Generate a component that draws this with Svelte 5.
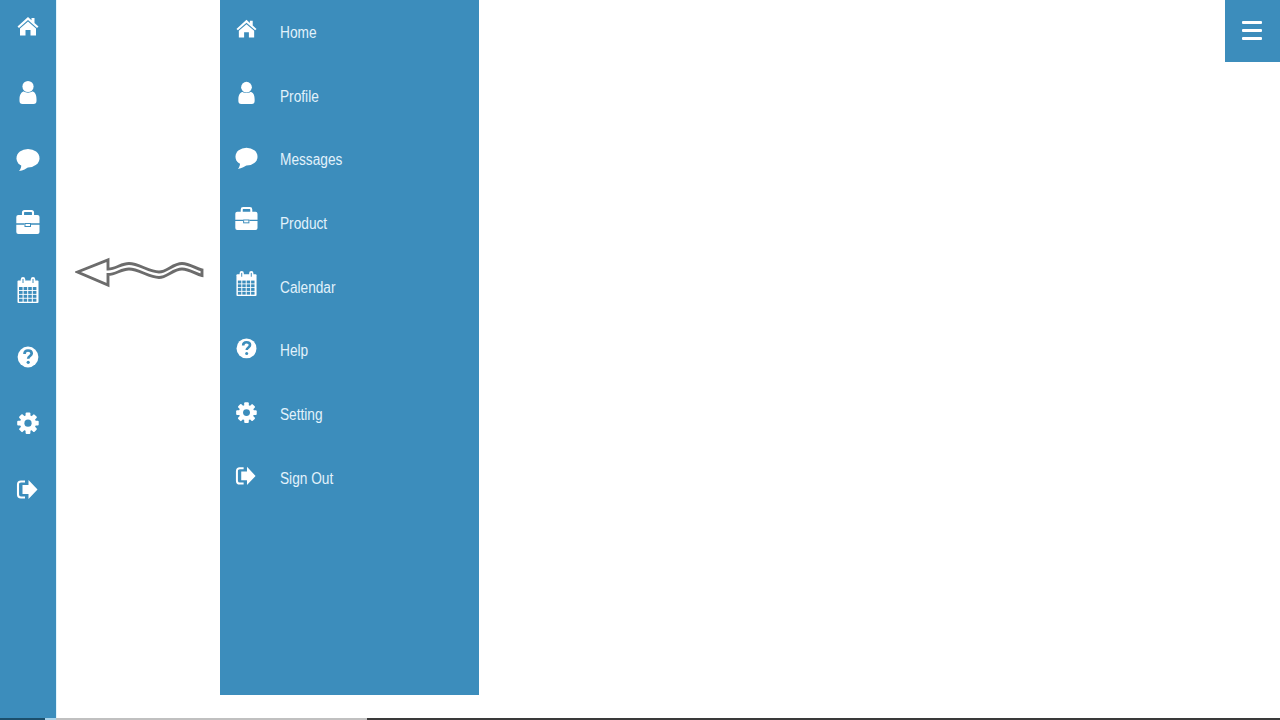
<script>
  const items = [
    { key: 'home', label: 'Home' },
    { key: 'user', label: 'Profile' },
    { key: 'comment', label: 'Messages' },
    { key: 'briefcase', label: 'Product' },
    { key: 'calendar', label: 'Calendar' },
    { key: 'help', label: 'Help' },
    { key: 'gear', label: 'Setting' },
    { key: 'signout', label: 'Sign Out' }
  ];
  const teeth = [0, 45, 90, 135];
  const cols = [0, 1, 2, 3];
  const rows = [0, 1, 2, 3];
</script>

{#snippet icon(key)}
  <svg class="icon" viewBox="0 0 24 28" aria-hidden="true">
    {#if key === 'home'}
      <path d="M12 4 L1.5 13.5 L3 15 L12 7 L21 15 L22.5 13.5 L18.5 10 V5 H15.5 V7.3 Z" />
      <path d="M4 15.5 L12 8.5 L20 15.5 V22.5 H14.5 V17 H9.5 V22.5 H4 Z" />
    {:else if key === 'user'}
      <circle cx="12" cy="7.5" r="5.6" />
      <path d="M3.5 20 C3.5 15 6 12.5 8 12.5 C9.5 14 14.5 14 16 12.5 C18.5 12.5 20.5 15 20.5 20 V22 Q20.5 25 17.5 25 H6.5 Q3.5 25 3.5 22 Z" />
    {:else if key === 'comment'}
      <ellipse cx="12" cy="13.2" rx="11.5" ry="9.3" />
      <path d="M5.5 18 C5.5 22 4.5 24.5 3 26 C7 25.5 10.5 24 13 21 Z" />
    {:else if key === 'briefcase'}
      <rect class="line-w" x="7" y="0" width="10" height="6" rx="1.5" />
      <rect x="0.3" y="4" width="23.2" height="19" rx="2" />
      <path class="line-b" d="M0 13 H8.5 M15 13 H24" />
      <rect class="line-b thin" x="9" y="12.5" width="5.5" height="3" />
    {:else if key === 'calendar'}
      <rect x="1.5" y="3.5" width="21" height="22.5" rx="1" />
      {#each rows as r}
        {#each cols as c}
          <rect class="cut" x={3 + c * 4.6} y={10 + r * 3.9} width="3.6" height="3" />
        {/each}
      {/each}
      <rect x="4.8" y="0" width="4.4" height="7.5" rx="2.2" />
      <rect x="14.8" y="0" width="4.4" height="7.5" rx="2.2" />
      <path class="line-b thin" d="M7 2 V6 M17 2 V6" />
    {:else if key === 'help'}
      <circle cx="12" cy="14" r="10.4" />
      <path class="line-b q" d="M8.5 11 C8.5 8.5 10 7.5 12 7.5 C14.5 7.5 15.7 9 15.7 10.5 C15.7 13 12.2 13 12.2 15.7" />
      <circle class="cut" cx="12.2" cy="19.3" r="1.6" />
    {:else if key === 'gear'}
      {#each teeth as t}
        <rect x="9.6" y="3.5" width="4.8" height="21.5" rx="1" transform="rotate({t} 12 14.2)" />
      {/each}
      <circle cx="12" cy="14.2" r="8" />
      <circle class="cut" cx="12" cy="14.2" r="3.6" />
    {:else if key === 'signout'}
      <path class="line-w" d="M9 6.5 H5 Q2 6.5 2 9.5 V19.5 Q2 22.5 5 22.5 H9" />
      <path d="M12.5 5 L21.5 14.5 L12.5 24 V19 H6.5 V10 H12.5 Z" />
    {/if}
  </svg>
{/snippet}

<div class="page">
  <div class="main">
    <nav class="rail">
      {#each items as item}
        <a class="rail-item" href="#top" aria-label={item.label}>{@render icon(item.key)}</a>
      {/each}
    </nav>

    <div class="arrow-col">
      <svg class="arrow" viewBox="0 0 140 40" aria-hidden="true">
        <path d="M2.5 22 L33 10 V19 C41 19 46 13.5 54 13.5 C64 13.5 74 22 84 22 C92 22 98 13.5 107 13.5 C115 13.5 121 19 127 20 V25.5 C121 24.5 115 19 107 19 C98 19 92 27.5 84 27.5 C74 27.5 64 19 54 19 C46 19 41 24.5 33 24.5 V35 Z" />
      </svg>
    </div>

    <nav class="panel">
      {#each items as item}
        <a class="panel-item" href="#top">
          <span class="panel-icon">{@render icon(item.key)}</span>
          <span class="panel-label">{item.label}</span>
        </a>
      {/each}
    </nav>

    <div class="content">
      <button class="burger" aria-label="Menu">
        <span></span><span></span><span></span>
      </button>
    </div>
  </div>

  <div class="strip">
    <span class="s-dark"></span><span class="s-light"></span><span class="s-grey"></span><span class="s-rest"></span>
  </div>
</div>

<style>
  :global(body) {
    margin: 0;
    background: #fff;
    overflow: hidden;
  }
  .page {
    width: 1280px;
    height: 720px;
    display: flex;
    flex-direction: column;
    font-family: "Liberation Sans", Arial, sans-serif;
  }
  .main {
    flex: 1;
    min-height: 0;
    display: flex;
    align-items: flex-start;
  }
  .rail {
    width: 56px;
    height: 100%;
    flex: none;
    box-sizing: content-box;
    background: #3c8dbc;
    border-right: 1px solid #e2f4fc;
    display: flex;
    flex-direction: column;
  }
  .rail-item {
    height: 54px;
    padding: 0 0 12px 0.5px;
    display: flex;
    align-items: center;
    justify-content: center;
    color: #fff;
  }
  .icon {
    display: block;
    width: 24px;
    height: 28px;
    overflow: visible;
    fill: #fff;
  }
  .line-w {
    fill: none;
    stroke: #fff;
    stroke-width: 2.1;
  }
  .line-b {
    fill: none;
    stroke: #3c8dbc;
    stroke-width: 1.3;
  }
  .line-b.thin {
    stroke-width: 1;
  }
  .line-b.q {
    stroke-width: 2.7;
  }
  .cut {
    fill: #3c8dbc;
  }
  .arrow-col {
    width: 163px;
    flex: none;
    padding-top: 250px;
    display: flex;
  }
  .arrow {
    display: block;
    width: 140px;
    height: 40px;
    margin-left: 18px;
    fill: #fff;
    stroke: #6c6c6c;
    stroke-width: 2.9;
    stroke-linejoin: miter;
  }
  .panel {
    width: 259px;
    height: 695px;
    flex: none;
    background: #3c8dbc;
    display: flex;
    flex-direction: column;
  }
  .panel-item {
    height: 63.7px;
    flex: none;
    display: flex;
    align-items: center;
    padding-left: 15px;
    color: #e2f2fb;
    text-decoration: none;
    font-size: 16px;
  }
  .panel-icon {
    width: 23px;
    height: 26.8px;
    margin-top: -4px;
    margin-right: 22px;
    flex: none;
  }
  .panel-icon :global(svg) {
    width: 23px;
    height: 26.8px;
  }
  .panel-label {
    display: inline-block;
    padding-top: 2px;
    transform: scaleX(0.855);
    transform-origin: left center;
    white-space: nowrap;
  }
  .content {
    flex: 1;
    display: flex;
    justify-content: flex-end;
  }
  .burger {
    width: 55px;
    height: 62px;
    border: 0;
    padding: 0 2px 2px 0;
    background: #3c8dbc;
    display: flex;
    flex-direction: column;
    align-items: center;
    justify-content: center;
    gap: 5px;
  }
  .burger span {
    display: block;
    width: 20px;
    height: 3px;
    border-radius: 1px;
    background: #fff;
  }
  .strip {
    height: 2px;
    flex: none;
    display: flex;
  }
  .strip span {
    display: block;
    height: 100%;
  }
  .s-dark {
    width: 45px;
    background: #1c4f6c;
  }
  .s-light {
    width: 11px;
    background: #a9d3ea;
  }
  .s-grey {
    width: 311px;
    background: #c0c0c0;
  }
  .s-rest {
    flex: 1;
    background: #3a3a3a;
  }
</style>
